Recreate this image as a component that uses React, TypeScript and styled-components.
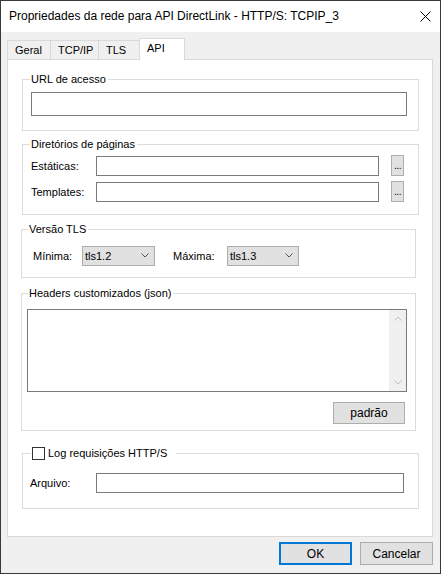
import React from "react";
import styled, { createGlobalStyle } from "styled-components";

const GlobalStyle = createGlobalStyle`
	* {
		box-sizing: border-box;
	}
	html, body {
		margin: 0;
		padding: 0;
		background: #f0f0f0;
	}
	body {
		font-family: "Liberation Sans", Arial, sans-serif;
		font-size: 11px;
		color: #000;
	}
`;

const Window = styled.div`
	width: 441px;
	height: 574px;
	border: 1px solid #3a3a3a;
	background: #f0f0f0;
	display: flex;
	flex-direction: column;
`;

const TitleBar = styled.div`
	height: 31px;
	flex-shrink: 0;
	background: #fff;
	display: flex;
	align-items: center;
	justify-content: space-between;
	padding: 0 9px 1px 8px;
	font-size: 12px;
`;

const CloseIcon = styled.svg`
	display: block;
`;

const Body = styled.div`
	flex: 1;
	display: flex;
	flex-direction: column;
	padding: 6px 7px 8px 6px;
`;

const TabStrip = styled.div`
	height: 21px;
	display: flex;
	align-items: flex-end;
	position: relative;
	z-index: 1;
`;

const Tab = styled.div<{ $w: number; $active?: boolean }>`
	width: ${(p) => p.$w}px;
	height: ${(p) => (p.$active ? 22 : 19)}px;
	margin-bottom: ${(p) => (p.$active ? -1 : 0)}px;
	margin-left: -1px;
	padding: 0 0 ${(p) => (p.$active ? 4 : 0)}px 7px;
	border: 1px solid #d9d9d9;
	border-bottom: none;
	background: ${(p) => (p.$active ? "#fff" : "#f0f0f0")};
	display: flex;
	align-items: center;
	&:first-child {
		margin-left: 0;
	}
`;

const Panel = styled.div`
	height: 478px;
	background: #fff;
	border: 1px solid #d9d9d9;
	display: flex;
	flex-direction: column;
	padding-top: 19px;
`;

const GroupBox = styled.div<{ $mt: number; $ml: number; $mr: number; $h: number; $pad: string }>`
	position: relative;
	height: ${(p) => p.$h}px;
	margin: ${(p) => p.$mt}px ${(p) => p.$mr}px 0 ${(p) => p.$ml}px;
	padding: ${(p) => p.$pad};
	border: 1px solid #dcdcdc;
	display: flex;
	flex-direction: column;
`;

const Caption = styled.div<{ $left: number }>`
	position: absolute;
	top: -8px;
	left: ${(p) => p.$left}px;
	height: 14px;
	padding: 0 2px 0 1px;
	background: #fff;
	display: flex;
	align-items: center;
	gap: 3px;
	white-space: nowrap;
`;

const CheckCaption = styled(Caption)`
	padding-right: 9px;
`;

const CheckBox = styled.span`
	width: 13px;
	height: 13px;
	border: 1px solid #333;
	background: #fff;
	display: block;
`;

const Row = styled.div<{ $gap?: number }>`
	display: flex;
	align-items: center;
	height: 21px;
	& + & {
		margin-top: ${(p) => p.$gap ?? 5}px;
	}
`;

const Label = styled.span<{ $w: number }>`
	width: ${(p) => p.$w}px;
	flex-shrink: 0;
`;

const TextInput = styled.div<{ $h?: number }>`
	flex: 1;
	height: ${(p) => p.$h ?? 20}px;
	border: 1px solid #7a7a7a;
	background: #fff;
`;

const BrowseButton = styled.div`
	width: 13px;
	height: 21px;
	margin-left: 12px;
	background: #e1e1e1;
	border: 1px solid #adadad;
	display: flex;
	align-items: flex-end;
	justify-content: center;
	font-size: 10px;
	line-height: 10px;
	padding-bottom: 4px;
	letter-spacing: -0.5px;
`;

const Combo = styled.div<{ $w: number }>`
	width: ${(p) => p.$w}px;
	height: 20px;
	flex-shrink: 0;
	background: #e1e1e1;
	border: 1px solid #adadad;
	display: flex;
	align-items: center;
	justify-content: space-between;
	padding: 0 5px 0 2px;
`;

const Spacer = styled.span<{ $w: number }>`
	width: ${(p) => p.$w}px;
	flex-shrink: 0;
`;

const MemoBox = styled.div`
	height: 83px;
	border: 1px solid #7a7a7a;
	background: #fff;
	display: flex;
	justify-content: flex-end;
`;

const ScrollTrack = styled.div`
	width: 17px;
	background: #f0f0f0;
	display: flex;
	flex-direction: column;
	justify-content: space-between;
`;

const ScrollArrow = styled.div`
	height: 17px;
	display: flex;
	align-items: center;
	justify-content: center;
`;

const GroupActions = styled.div`
	display: flex;
	justify-content: flex-end;
	margin-top: 10px;
	padding-right: 2px;
`;

const Button = styled.div<{ $w?: number; $h?: number; $default?: boolean }>`
	width: ${(p) => p.$w ?? 73}px;
	height: ${(p) => p.$h ?? 23}px;
	background: #e1e1e1;
	border: ${(p) => (p.$default ? "2px solid #0078d7" : "1px solid #adadad")};
	display: flex;
	align-items: center;
	justify-content: center;
	font-size: 12px;
`;

const ButtonRow = styled.div`
	margin-top: 5px;
	display: flex;
	justify-content: flex-end;
	gap: 8px;
`;

const Chevron: React.FC<{ up?: boolean; color?: string }> = ({ up, color = "#555" }) => (
	<svg width="8" height="5" viewBox="0 0 8 5">
		<polyline
			points={up ? "0.5,4.5 4,1 7.5,4.5" : "0.5,0.5 4,4 7.5,0.5"}
			fill="none"
			stroke={color}
			strokeWidth="1"
		/>
	</svg>
);

const App: React.FC = () => {
	return (
		<>
			<GlobalStyle />
			<Window>
				<TitleBar>
					<span>Propriedades da rede para API DirectLink - HTTP/S: TCPIP_3</span>
					<CloseIcon width="11" height="11" viewBox="0 0 11 11">
						<path d="M0.5 0.5 L10.5 10.5 M10.5 0.5 L0.5 10.5" stroke="#000" strokeWidth="1" />
					</CloseIcon>
				</TitleBar>
				<Body>
					<TabStrip>
						<Tab $w={44}>Geral</Tab>
						<Tab $w={49}>TCP/IP</Tab>
						<Tab $w={42}>TLS</Tab>
						<Tab $w={46} $active>API</Tab>
					</TabStrip>
					<Panel>
						<GroupBox $mt={0} $ml={14} $mr={13} $h={52} $pad="13px 11px 0 8px">
							<Caption $left={7}>URL de acesso</Caption>
							<Row>
								<TextInput $h={24} />
							</Row>
						</GroupBox>

						<GroupBox $mt={13} $ml={14} $mr={13} $h={71} $pad="10px 14px 0 8px">
							<Caption $left={7}>Diretórios de páginas</Caption>
							<Row>
								<Label $w={65}>Estáticas:</Label>
								<TextInput />
								<BrowseButton>...</BrowseButton>
							</Row>
							<Row>
								<Label $w={65}>Templates:</Label>
								<TextInput />
								<BrowseButton>...</BrowseButton>
							</Row>
						</GroupBox>

						<GroupBox $mt={14} $ml={13} $mr={16} $h={49} $pad="15px 0 0 11px">
							<Caption $left={6}>Versão TLS</Caption>
							<Row>
								<Label $w={49}>Mínima:</Label>
								<Combo $w={73}>
									tls1.2
									<Chevron />
								</Combo>
								<Spacer $w={18} />
								<Label $w={54}>Máxima:</Label>
								<Combo $w={72}>
									tls1.3
									<Chevron />
								</Combo>
							</Row>
						</GroupBox>

						<GroupBox $mt={15} $ml={13} $mr={16} $h={138} $pad="15px 8px 0 5px">
							<Caption $left={6}>Headers customizados (json)</Caption>
							<MemoBox>
								<ScrollTrack>
									<ScrollArrow>
										<Chevron up color="#c0c0c0" />
									</ScrollArrow>
									<ScrollArrow>
										<Chevron color="#c0c0c0" />
									</ScrollArrow>
								</ScrollTrack>
							</MemoBox>
							<GroupActions>
								<Button $w={72} $h={22}>padrão</Button>
							</GroupActions>
						</GroupBox>

						<GroupBox $mt={22} $ml={14} $mr={13} $h={56} $pad="18px 14px 0 7px">
							<CheckCaption $left={8}>
								<CheckBox />
								Log requisições HTTP/S
							</CheckCaption>
							<Row>
								<Label $w={66}>Arquivo:</Label>
								<TextInput />
							</Row>
						</GroupBox>
					</Panel>
					<ButtonRow>
						<Button $default>OK</Button>
						<Button>Cancelar</Button>
					</ButtonRow>
				</Body>
			</Window>
		</>
	);
};

export default App;
